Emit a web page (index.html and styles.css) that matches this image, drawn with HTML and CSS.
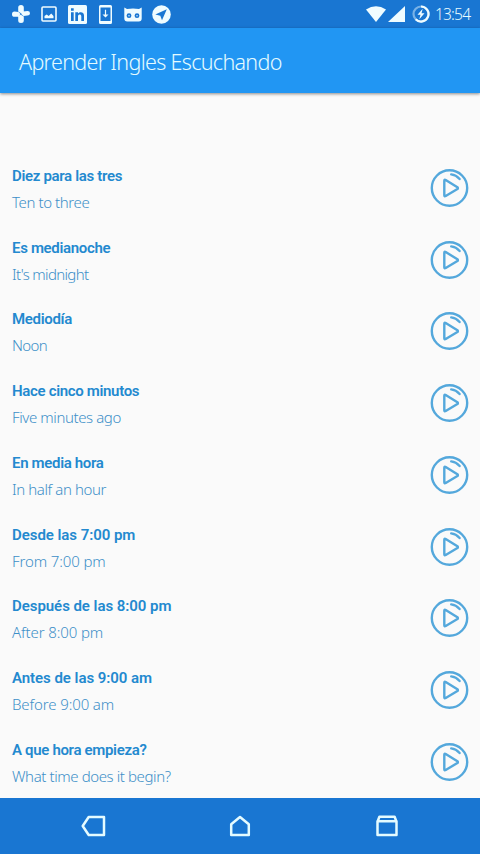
FILE: index.html
```
<!DOCTYPE html>
<html lang="es">
<head>
<meta charset="utf-8">
<title>Aprender Ingles Escuchando</title>
<link rel="stylesheet" href="styles.css">
</head>
<body>
<svg class="defs" aria-hidden="true">
  <symbol id="play" viewBox="0 0 40 40">
    <circle cx="19.500" cy="20" r="17.700"/>
    <path d="M14.300 12.800v14.400q0 1.500 1.400.8l11.700-7q1-.9 0-1.700l-11.700-7.300q-1.400-.8-1.400.8z"/>
    <path d="M21.200 6.400c3.300.4 5.900 1.800 8.400 4.600"/>
  </symbol>
</svg>
<div class="screen">
  <header class="status">
    <div class="notifications">
      <svg class="ic-plus" viewBox="0 0 18 18"><path d="M6.200 2.500Q6.200 0 9 0t2.800 2.500V6.500L9.800 8.700 6.200 6.500zM11.800 15.500q0 2.500-2.800 2.500t-2.800-2.500V11l2.600-1.200 3 1.700zM2.500 11.800q-2.500 0-2.500-2.600t2.500-2.600L6.500 6.900l2 2-2.200 2.900zM15.500 6q2.500 0 2.500 2.300t-2.500 2.300L11.500 11 9.200 9l2-2.500z"/></svg>
      <svg class="ic-image" viewBox="0 0 16 16"><rect class="line" x="1" y="1" width="14" height="14" rx="1"/><path d="M3.500 12.200V10l2.200-1.400 2 1.300 2.500-2.400 2.300 2.600v2.100z"/></svg>
      <svg class="ic-in" viewBox="0 0 19 19"><rect width="19" height="19" rx="1.500"/><path class="cut" d="M3 7.300h2.700V16H3zM3 3.300h2.700v2.500H3zM7.300 7.300H10v1.200c1.800-2.200 6-1.800 6 2V16h-2.700v-4.800c0-2.300-3.300-2.300-3.300 0V16H7.300z"/></svg>
      <svg class="ic-down" viewBox="0 0 13 19"><path fill-rule="evenodd" d="M1.500 0h10Q13 0 13 1.500v16q0 1.500-1.500 1.500h-10Q0 19 0 17.500v-16Q0 0 1.500 0zM1.500 2.500v13.500h10V2.500z"/><path d="M5.900 4.800h1.200v4.700h2.400l-3 3-3-3h2.400z"/></svg>
      <svg class="ic-cyan" viewBox="0 0 18 15"><path d="M.3.500 3 2q6-1 12 0L17.700.5v11q0 3-3 3H3.300q-3 0-3-3z"/><circle class="cut" cx="5" cy="8.700" r="2.400"/><circle class="cut" cx="13" cy="8.700" r="2.400"/><circle cx="5" cy="8.700" r=".7"/><circle cx="13" cy="8.700" r=".7"/></svg>
      <svg class="ic-send" viewBox="0 0 19 19"><circle cx="9.500" cy="9.500" r="9.300"/><path class="cut" d="M14.800 4.300 3.300 9.500l5 1.300 1.700 4.500z"/></svg>
    </div>
    <div class="system">
      <svg class="ic-wifi" viewBox="0 0 20 16"><path d="M0 3.500Q10-3 20 3.500L10 16z"/></svg>
      <svg class="ic-cell" viewBox="0 0 17 16"><path d="M17 0v16H0z"/></svg>
      <svg class="ic-power" viewBox="0 0 18 18"><circle class="ring-dim" cx="9" cy="9" r="7.500"/><path class="ring" d="M9 1.500a7.500 7.500 0 1 1-5.300 12.800"/><path d="M10.700 3.800 5.500 9.800h3l-1.200 4.400 5.200-6h-3z"/></svg>
      <time class="clock">13:54</time>
    </div>
  </header>
  <div class="appbar"><h1>Aprender Ingles Escuchando</h1></div>
  <main class="list">
    <article class="row"><div><h2>Diez para las tres</h2><p>Ten to three</p></div><svg class="play"><use href="#play"/></svg></article>
    <article class="row"><div><h2>Es medianoche</h2><p class="tight">It's midnight</p></div><svg class="play"><use href="#play"/></svg></article>
    <article class="row"><div><h2>Mediodía</h2><p class="tight">Noon</p></div><svg class="play"><use href="#play"/></svg></article>
    <article class="row"><div><h2>Hace cinco minutos</h2><p>Five minutes ago</p></div><svg class="play"><use href="#play"/></svg></article>
    <article class="row"><div><h2>En media hora</h2><p>In half an hour</p></div><svg class="play"><use href="#play"/></svg></article>
    <article class="row"><div><h2 class="timed">Desde las 7:00 pm</h2><p class="timed">From 7:00 pm</p></div><svg class="play"><use href="#play"/></svg></article>
    <article class="row"><div><h2 class="timed">Después de las 8:00 pm</h2><p class="timed">After 8:00 pm</p></div><svg class="play"><use href="#play"/></svg></article>
    <article class="row"><div><h2 class="timed">Antes de las 9:00 am</h2><p class="timed">Before 9:00 am</p></div><svg class="play"><use href="#play"/></svg></article>
    <article class="row"><div><h2>A que hora empieza?</h2><p>What time does it begin?</p></div><svg class="play"><use href="#play"/></svg></article>
  </main>
  <nav class="navbar">
    <svg viewBox="0 0 26 22"><path d="M8.700 2h15.300v18H8.700L2.700 11z"/></svg>
    <svg viewBox="0 0 26 22"><path d="M4.200 9.200 13 2l8.800 7.200V20H4.200z"/></svg>
    <svg viewBox="0 0 26 22"><path d="M3.500 6.300h19V20h-19zM3.700 6.300l1.700-4.500h15.200l1.700 4.500"/></svg>
  </nav>
</div>
</body>
</html>
```
FILE: styles.css
```
* { box-sizing: border-box; }
body { margin: 0; font-family: "Noto Sans", "Open Sans", sans-serif; background: #fafafa; }
h1, h2, p { margin: 0; white-space: nowrap; }
svg { display: block; flex: none; }
.defs { position: absolute; width: 0; height: 0; }
.screen { width: 480px; height: 854px; display: flex; flex-direction: column; overflow: hidden; }

.status { height: 28px; flex: none; display: flex; justify-content: space-between; align-items: center; padding: 0 9px 0 12px; background: #1976d2; color: #e8fbff; fill: #effcff; }
.notifications, .system { display: flex; align-items: center; }
.cut { fill: #1976d2; }
.line { fill: none; stroke: #effcff; stroke-width: 1.6; }
.ic-plus { width: 18px; height: 18px; }
.ic-image { width: 16px; height: 16px; margin-left: 11px; }
.ic-in { width: 19px; height: 19px; margin-left: 11px; }
.ic-down { width: 13px; height: 19px; margin-left: 12px; }
.ic-cyan { width: 18px; height: 15px; margin-left: 12px; }
.ic-send { width: 19px; height: 19px; margin-left: 10px; }
.ic-wifi { width: 20px; height: 16px; }
.ic-cell { width: 17px; height: 16px; margin-left: 2px; }
.ic-power { width: 18px; height: 18px; margin: 0 5px 0 7px; }
.ring, .ring-dim { fill: none; stroke: #effcff; stroke-width: 2.2; }
.ring-dim { opacity: .45; }
.clock { width: 36px; font-size: 15.5px; font-weight: 350; line-height: 20px; letter-spacing: -.8px; white-space: nowrap; }

.appbar { position: relative; height: 65px; flex: none; display: flex; align-items: center; padding: 3px 0 0 19px; background: #2196f3; box-shadow: 0 1px 3px rgba(0, 0, 0, .45); }
.appbar h1 { font-size: 21.5px; line-height: 30px; font-weight: 350; letter-spacing: -.68px; color: #e4fbff; }

.list { flex: 1; padding-top: 59px; }
.row { height: 71.75px; display: flex; align-items: center; justify-content: space-between; padding: 1px 10.5px 0 12px; color: #2389cf; }
.row h2 { padding-top: 2px; font-family: Roboto, "Noto Sans", sans-serif; font-size: 15px; line-height: 27px; font-weight: 600; letter-spacing: -.33px; }
.row h2.timed { letter-spacing: -.05px; }
.row p { margin-top: -1px; font-size: 15px; line-height: 27px; font-weight: 350; letter-spacing: -.4px; color: #3d8fc8; }
.row p.tight { letter-spacing: -.65px; }
.row p.timed { letter-spacing: -.12px; }
.play { width: 40px; height: 40px; margin-top: -1px; fill: none; stroke: #54a8dc; stroke-width: 2.4; stroke-linecap: round; stroke-linejoin: round; }

.navbar { height: 56px; flex: none; display: flex; justify-content: space-between; align-items: center; padding: 0 80px; background: #1976d2; }
.navbar svg { width: 26px; height: 22px; fill: none; stroke: #e4fbff; stroke-width: 2.5; stroke-linejoin: round; }
```
